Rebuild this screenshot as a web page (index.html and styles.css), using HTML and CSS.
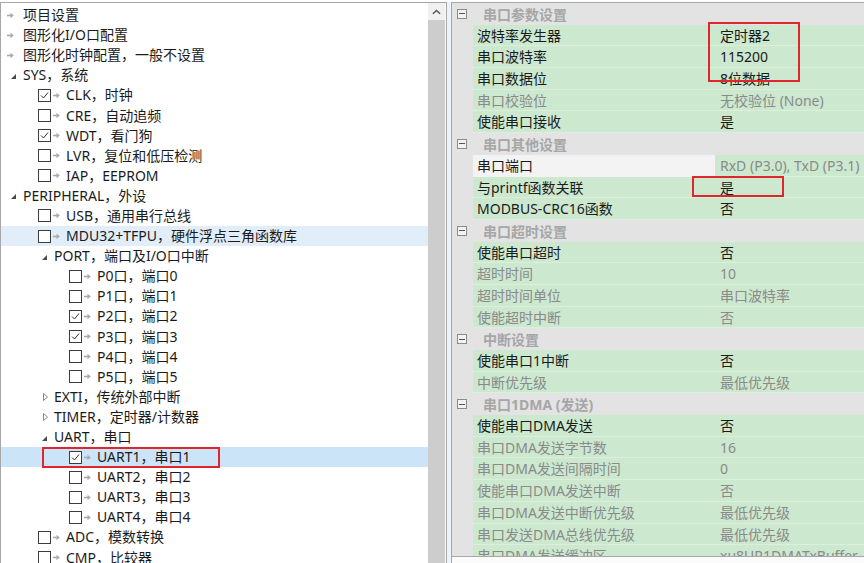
FILE: index.html
```html
<!DOCTYPE html>
<html>
<head>
<meta charset="utf-8">
<link rel="stylesheet" href="styles.css">
</head>
<body>
<div class="app">
  <div class="left">
    <div class="tree">
      <div class="row"><span class="lead"><svg class="arr" viewBox="0 0 7 7"><path d="M0 3.5H4" /><polygon points="3.5,0.8 6.8,3.5 3.5,6.2" /></svg></span><span class="t">项目设置</span></div>
      <div class="row"><span class="lead"><svg class="arr" viewBox="0 0 7 7"><path d="M0 3.5H4" /><polygon points="3.5,0.8 6.8,3.5 3.5,6.2" /></svg></span><span class="t">图形化I/O口配置</span></div>
      <div class="row"><span class="lead"><svg class="arr" viewBox="0 0 7 7"><path d="M0 3.5H4" /><polygon points="3.5,0.8 6.8,3.5 3.5,6.2" /></svg></span><span class="t">图形化时钟配置，一般不设置</span></div>
      <div class="row"><span class="exp"><svg class="tri" viewBox="0 0 5 5"><polygon points="5,0 5,5 0,5" /></svg></span><span class="t">SYS，系统</span></div>
      <div class="row l1"><span class="cb on"><svg viewBox="0 0 11 11"><path d="M2 5.5L4.5 8L9 2.5" /></svg></span><svg class="arr" viewBox="0 0 7 7"><path d="M0 3.5H4" /><polygon points="3.5,0.8 6.8,3.5 3.5,6.2" /></svg><span class="t">CLK，时钟</span></div>
      <div class="row l1"><span class="cb"></span><svg class="arr" viewBox="0 0 7 7"><path d="M0 3.5H4" /><polygon points="3.5,0.8 6.8,3.5 3.5,6.2" /></svg><span class="t">CRE，自动追频</span></div>
      <div class="row l1"><span class="cb on"><svg viewBox="0 0 11 11"><path d="M2 5.5L4.5 8L9 2.5" /></svg></span><svg class="arr" viewBox="0 0 7 7"><path d="M0 3.5H4" /><polygon points="3.5,0.8 6.8,3.5 3.5,6.2" /></svg><span class="t">WDT，看门狗</span></div>
      <div class="row l1"><span class="cb"></span><svg class="arr" viewBox="0 0 7 7"><path d="M0 3.5H4" /><polygon points="3.5,0.8 6.8,3.5 3.5,6.2" /></svg><span class="t">LVR，复位和低压检测</span></div>
      <div class="row l1"><span class="cb"></span><svg class="arr" viewBox="0 0 7 7"><path d="M0 3.5H4" /><polygon points="3.5,0.8 6.8,3.5 3.5,6.2" /></svg><span class="t">IAP，EEPROM</span></div>
      <div class="row"><span class="exp"><svg class="tri" viewBox="0 0 5 5"><polygon points="5,0 5,5 0,5" /></svg></span><span class="t">PERIPHERAL，外设</span></div>
      <div class="row l1"><span class="cb"></span><svg class="arr" viewBox="0 0 7 7"><path d="M0 3.5H4" /><polygon points="3.5,0.8 6.8,3.5 3.5,6.2" /></svg><span class="t">USB，通用串行总线</span></div>
      <div class="row l1 hover"><span class="cb"></span><svg class="arr" viewBox="0 0 7 7"><path d="M0 3.5H4" /><polygon points="3.5,0.8 6.8,3.5 3.5,6.2" /></svg><span class="t">MDU32+TFPU，硬件浮点三角函数库</span></div>
      <div class="row l1"><span class="exp"><svg class="tri" viewBox="0 0 5 5"><polygon points="5,0 5,5 0,5" /></svg></span><span class="t">PORT，端口及I/O口中断</span></div>
      <div class="row l2"><span class="cb"></span><svg class="arr" viewBox="0 0 7 7"><path d="M0 3.5H4" /><polygon points="3.5,0.8 6.8,3.5 3.5,6.2" /></svg><span class="t">P0口，端口0</span></div>
      <div class="row l2"><span class="cb"></span><svg class="arr" viewBox="0 0 7 7"><path d="M0 3.5H4" /><polygon points="3.5,0.8 6.8,3.5 3.5,6.2" /></svg><span class="t">P1口，端口1</span></div>
      <div class="row l2"><span class="cb on"><svg viewBox="0 0 11 11"><path d="M2 5.5L4.5 8L9 2.5" /></svg></span><svg class="arr" viewBox="0 0 7 7"><path d="M0 3.5H4" /><polygon points="3.5,0.8 6.8,3.5 3.5,6.2" /></svg><span class="t">P2口，端口2</span></div>
      <div class="row l2"><span class="cb on"><svg viewBox="0 0 11 11"><path d="M2 5.5L4.5 8L9 2.5" /></svg></span><svg class="arr" viewBox="0 0 7 7"><path d="M0 3.5H4" /><polygon points="3.5,0.8 6.8,3.5 3.5,6.2" /></svg><span class="t">P3口，端口3</span></div>
      <div class="row l2"><span class="cb"></span><svg class="arr" viewBox="0 0 7 7"><path d="M0 3.5H4" /><polygon points="3.5,0.8 6.8,3.5 3.5,6.2" /></svg><span class="t">P4口，端口4</span></div>
      <div class="row l2"><span class="cb"></span><svg class="arr" viewBox="0 0 7 7"><path d="M0 3.5H4" /><polygon points="3.5,0.8 6.8,3.5 3.5,6.2" /></svg><span class="t">P5口，端口5</span></div>
      <div class="row l1"><span class="exp"><svg class="tri2" viewBox="0 0 5 8"><polygon points="0.5,0.5 4.5,4 0.5,7.5" /></svg></span><span class="t">EXTI，传统外部中断</span></div>
      <div class="row l1"><span class="exp"><svg class="tri2" viewBox="0 0 5 8"><polygon points="0.5,0.5 4.5,4 0.5,7.5" /></svg></span><span class="t">TIMER，定时器/计数器</span></div>
      <div class="row l1"><span class="exp"><svg class="tri" viewBox="0 0 5 5"><polygon points="5,0 5,5 0,5" /></svg></span><span class="t">UART，串口</span></div>
      <div class="row l2 sel"><span class="cb on"><svg viewBox="0 0 11 11"><path d="M2 5.5L4.5 8L9 2.5" /></svg></span><svg class="arr" viewBox="0 0 7 7"><path d="M0 3.5H4" /><polygon points="3.5,0.8 6.8,3.5 3.5,6.2" /></svg><span class="t">UART1，串口1</span></div>
      <div class="row l2"><span class="cb"></span><svg class="arr" viewBox="0 0 7 7"><path d="M0 3.5H4" /><polygon points="3.5,0.8 6.8,3.5 3.5,6.2" /></svg><span class="t">UART2，串口2</span></div>
      <div class="row l2"><span class="cb"></span><svg class="arr" viewBox="0 0 7 7"><path d="M0 3.5H4" /><polygon points="3.5,0.8 6.8,3.5 3.5,6.2" /></svg><span class="t">UART3，串口3</span></div>
      <div class="row l2"><span class="cb"></span><svg class="arr" viewBox="0 0 7 7"><path d="M0 3.5H4" /><polygon points="3.5,0.8 6.8,3.5 3.5,6.2" /></svg><span class="t">UART4，串口4</span></div>
      <div class="row l1"><span class="cb"></span><svg class="arr" viewBox="0 0 7 7"><path d="M0 3.5H4" /><polygon points="3.5,0.8 6.8,3.5 3.5,6.2" /></svg><span class="t">ADC，模数转换</span></div>
      <div class="row l1"><span class="cb"></span><svg class="arr" viewBox="0 0 7 7"><path d="M0 3.5H4" /><polygon points="3.5,0.8 6.8,3.5 3.5,6.2" /></svg><span class="t">CMP，比较器</span></div>
    </div>
    <div class="vscroll">
      <div class="sbtn"><svg viewBox="0 0 10 6"><path d="M1 5L5 1.2L9 5" /></svg></div>
      <div class="thumb"></div>
    </div>
    <div class="gap"></div>
  </div>
  <div class="splitter"></div>
  <div class="right">
    <div class="grid">
      <div class="cat"><span class="minus"></span><span class="ct">串口参数设置</span></div>
      <div class="prop"><span class="gut"></span><span class="nm">波特率发生器</span><span class="vl">定时器2</span></div>
      <div class="prop"><span class="gut"></span><span class="nm">串口波特率</span><span class="vl">115200</span></div>
      <div class="prop"><span class="gut"></span><span class="nm">串口数据位</span><span class="vl">8位数据</span></div>
      <div class="prop dis"><span class="gut"></span><span class="nm">串口校验位</span><span class="vl">无校验位 (None)</span></div>
      <div class="prop"><span class="gut"></span><span class="nm">使能串口接收</span><span class="vl">是</span></div>
      <div class="cat"><span class="minus"></span><span class="ct">串口其他设置</span></div>
      <div class="prop psel"><span class="gut"></span><span class="nm">串口端口</span><span class="vl gray">RxD (P3.0), TxD (P3.1)</span></div>
      <div class="prop"><span class="gut"></span><span class="nm">与printf函数关联</span><span class="vl">是</span></div>
      <div class="prop"><span class="gut"></span><span class="nm">MODBUS-CRC16函数</span><span class="vl">否</span></div>
      <div class="cat"><span class="minus"></span><span class="ct">串口超时设置</span></div>
      <div class="prop"><span class="gut"></span><span class="nm">使能串口超时</span><span class="vl">否</span></div>
      <div class="prop dis"><span class="gut"></span><span class="nm">超时时间</span><span class="vl">10</span></div>
      <div class="prop dis"><span class="gut"></span><span class="nm">超时时间单位</span><span class="vl">串口波特率</span></div>
      <div class="prop dis"><span class="gut"></span><span class="nm">使能超时中断</span><span class="vl">否</span></div>
      <div class="cat"><span class="minus"></span><span class="ct">中断设置</span></div>
      <div class="prop"><span class="gut"></span><span class="nm">使能串口1中断</span><span class="vl">否</span></div>
      <div class="prop dis"><span class="gut"></span><span class="nm">中断优先级</span><span class="vl">最低优先级</span></div>
      <div class="cat"><span class="minus"></span><span class="ct">串口1DMA (发送)</span></div>
      <div class="prop"><span class="gut"></span><span class="nm">使能串口DMA发送</span><span class="vl">否</span></div>
      <div class="prop dis"><span class="gut"></span><span class="nm">串口DMA发送字节数</span><span class="vl">16</span></div>
      <div class="prop dis"><span class="gut"></span><span class="nm">串口DMA发送间隔时间</span><span class="vl">0</span></div>
      <div class="prop dis"><span class="gut"></span><span class="nm">使能串口DMA发送中断</span><span class="vl">否</span></div>
      <div class="prop dis"><span class="gut"></span><span class="nm">串口DMA发送中断优先级</span><span class="vl">最低优先级</span></div>
      <div class="prop dis"><span class="gut"></span><span class="nm">串口发送DMA总线优先级</span><span class="vl">最低优先级</span></div>
      <div class="prop dis"><span class="gut"></span><span class="nm">串口DMA发送缓冲区</span><span class="vl">xu8UR1DMATxBuffer</span></div>
    </div>
    <div class="desc"></div>
  </div>
</div>
<div class="mark m1"></div>
<div class="mark m2"></div>
<div class="mark m3"></div>
</body>
</html>
```

FILE: styles.css
```css
html, body {
  margin: 0;
  padding: 0;
  background: #ffffff;
}
body {
  width: 864px;
  height: 563px;
  overflow: hidden;
  position: relative;
  font-family: "Noto Sans", "Noto Sans CJK SC", sans-serif;
  font-size: 14px;
  color: #1b1b1b;
}
.app {
  display: flex;
  height: 561px;
  padding-top: 2px;
}
.left {
  display: flex;
  width: 445px;
  border-top: 1px solid #a7a7a7;
  border-left: 1px solid #a7a7a7;
  border-right: 1px solid #a7a7a7;
  background: #fff;
  overflow: hidden;
}
.tree {
  width: 427px;
  padding-top: 2px;
  overflow: hidden;
}
.row {
  height: 20.1px;
  display: flex;
  align-items: center;
  white-space: nowrap;
  line-height: 20px;
}
.row.l1 { padding-left: 31px; }
.row.l2 { padding-left: 62px; }
.row.hover { background: #e1eefa; }
.row.sel { background: #cce4f7; }
.lead {
  width: 16px;
  padding-left: 6px;
  display: flex;
  align-items: center;
}
.exp {
  width: 12px;
  padding-left: 10px;
  display: flex;
  align-items: center;
}
.tri {
  width: 5px;
  height: 5px;
  fill: #4a4a4a;
  margin-top: 2px;
}
.tri2 {
  width: 5px;
  height: 8px;
  fill: none;
  stroke: #8a8a8a;
  stroke-width: 1;
  margin-left: 1px;
}
.arr {
  width: 7px;
  height: 7px;
  flex: none;
  fill: #a9a9a9;
  stroke: #a9a9a9;
  stroke-width: 1.6;
}
.arr polygon { stroke: none; }
.cb {
  width: 11px;
  height: 11px;
  margin-left: 6px;
  margin-right: 2px;
  border: 1px solid #3c3c3c;
  background: #fff;
  flex: none;
  display: flex;
}
.cb svg {
  width: 11px;
  height: 11px;
  fill: none;
  stroke: #333;
  stroke-width: 1;
}
.cb + .arr { margin-right: 6px; }
.vscroll {
  width: 17px;
  display: flex;
  flex-direction: column;
  background: #cdcdcd;
}
.sbtn {
  height: 17px;
  background: #f0f0f0;
  display: flex;
  align-items: center;
  justify-content: center;
}
.sbtn svg {
  width: 9px;
  height: 6px;
  fill: none;
  stroke: #555;
  stroke-width: 1.6;
}
.thumb {
  flex: 1;
  background: #cdcdcd;
}
.gap {
  width: 1px;
  background: #fafafa;
}
.splitter {
  width: 4px;
  background: #eef3f9;
}
.right {
  flex: 1;
  display: flex;
  flex-direction: column;
  border-top: 1px solid #a7a7a7;
  border-left: 1px solid #a7a7a7;
  overflow: hidden;
}
.grid {
  height: 553px;
  overflow: hidden;
  background: #e3e3e3;
}
.cat {
  height: 21.7px;
  display: flex;
  align-items: center;
  background: #e3e3e3;
  white-space: nowrap;
}
.minus {
  width: 8px;
  height: 8px;
  margin-left: 5px;
  border: 1px solid #8c8c8c;
  position: relative;
  background: #f2f2f2;
  flex: none;
}
.minus::after {
  content: "";
  position: absolute;
  left: 1px;
  right: 1px;
  top: 3.5px;
  height: 1px;
  background: #555;
}
.ct {
  margin-left: 16px;
  font-weight: bold;
  color: #a6a6a6;
}
.prop {
  height: 21.7px;
  display: flex;
  white-space: nowrap;
  line-height: 21px;
}
.gut {
  width: 21px;
  background: #e3e3e3;
  flex: none;
}
.nm {
  width: 238px;
  padding-left: 4px;
  background: #cce8cf;
  border-bottom: 1px solid #dcefdd;
  overflow: hidden;
  flex: none;
}
.vl {
  flex: 1;
  padding-left: 5px;
  background: #cce8cf;
  border-bottom: 1px solid #dcefdd;
  overflow: hidden;
}
.prop.dis .nm, .prop.dis .vl, .vl.gray { color: #8a8a8a; }
.prop.psel .nm { background: #f3f3f3; border-bottom-color: #f3f3f3; }
.desc {
  flex: 1;
  border-top: 1px solid #a7a7a7;
  background: #fbfbfb;
}
.mark {
  position: absolute;
  border: 2px solid #e0262c;
  box-sizing: border-box;
}
.m1 { left: 42px; top: 447px; width: 178px; height: 21px; }
.m2 { left: 708px; top: 22px; width: 92px; height: 60px; }
.m3 { left: 692px; top: 176px; width: 92px; height: 21px; }
```
